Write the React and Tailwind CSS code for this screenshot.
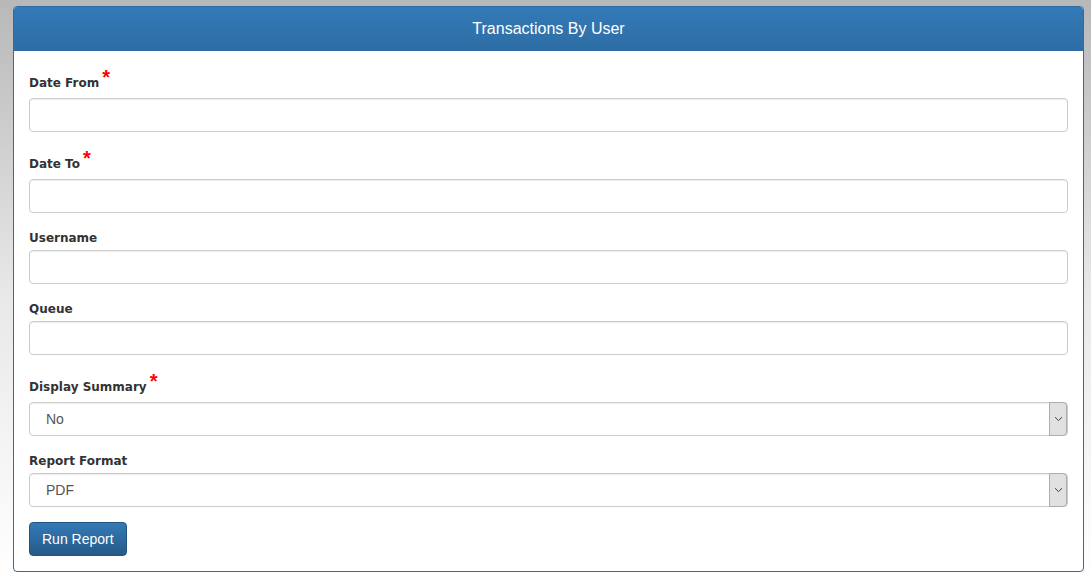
import React from "react";

const FIELDS = [
  { label: "Date From", required: true, type: "input" },
  { label: "Date To", required: true, type: "input" },
  { label: "Username", required: false, type: "input" },
  { label: "Queue", required: false, type: "input" },
  { label: "Display Summary", required: true, type: "select", value: "No" },
  { label: "Report Format", required: false, type: "select", value: "PDF" },
];

const labelFont = { fontFamily: '"DejaVu Sans", Verdana, sans-serif' };

const Label = ({ text, required }) =>
  required ? (
    <div className="h-[33px] pt-[9px]">
      <label className="flex items-start text-[12px] font-bold leading-[18px] text-[#333]" style={labelFont}>
        {text}
        <span
          className="ml-[3px] -mt-[7px] text-[20px] leading-none text-[#ff0000]"
          style={{ fontFamily: '"Liberation Sans", Arial, sans-serif' }}
        >
          *
        </span>
      </label>
    </div>
  ) : (
    <div className="h-[23px] pt-[2px]">
      <label className="block text-[12px] font-bold leading-[18px] text-[#333]" style={labelFont}>
        {text}
      </label>
    </div>
  );

const SelectBox = ({ value }) => (
  <div className="flex h-[34px] w-full items-stretch rounded-[4px] border border-[#cccccc] bg-white shadow-[inset_0_1px_1px_rgba(0,0,0,0.075)]">
    <div className="flex flex-1 items-center pl-[16px] text-[14px] text-[#555]">{value}</div>
    <div className="my-[-1px] flex w-[18px] items-center justify-center rounded-r-[4px] border border-[#adadad] bg-[#e1e1e1]">
      <svg width="9" height="6" viewBox="0 0 9 6">
        <path d="M1 1.2 L4.5 4.6 L8 1.2" fill="none" stroke="#444" strokeWidth="1" />
      </svg>
    </div>
  </div>
);

const App = () => {
  return (
    <div
      className="min-h-[583px] w-full bg-gradient-to-b from-[#b8b8b8] via-[#e8e8e8] to-[#ffffff] pl-[13px] pr-[7px] pt-[6px] pb-[11px]"
      style={{ fontFamily: '"Liberation Sans", Arial, sans-serif' }}
    >
      <div className="overflow-hidden rounded-[4px] border border-[#2e6da4] bg-white">
        {/* Header */}
        <div className="flex h-[44px] items-center justify-center bg-gradient-to-b from-[#337ab7] to-[#2e6da4] text-[16px] text-white">
          Transactions By User
        </div>

        <div className="px-[15px] pt-[14px] pb-[15px]">
          {FIELDS.map((f) => (
            <div key={f.label} className="mb-[14px]">
              <Label text={f.label} required={f.required} />
              {f.type === "input" ? (
                <input
                  type="text"
                  className="block h-[34px] w-full rounded-[4px] border border-[#cccccc] bg-white px-3 text-[14px] text-[#555] shadow-[inset_0_1px_1px_rgba(0,0,0,0.075)] outline-none"
                />
              ) : (
                <SelectBox value={f.value} />
              )}
            </div>
          ))}

          <button
            type="button"
            className="mt-[1px] h-[34px] rounded-[4px] border border-[#245580] bg-gradient-to-b from-[#337ab7] to-[#265a88] px-[12px] text-[14px] text-white"
          >
            Run Report
          </button>
        </div>
      </div>
    </div>
  );
};

export default App;
